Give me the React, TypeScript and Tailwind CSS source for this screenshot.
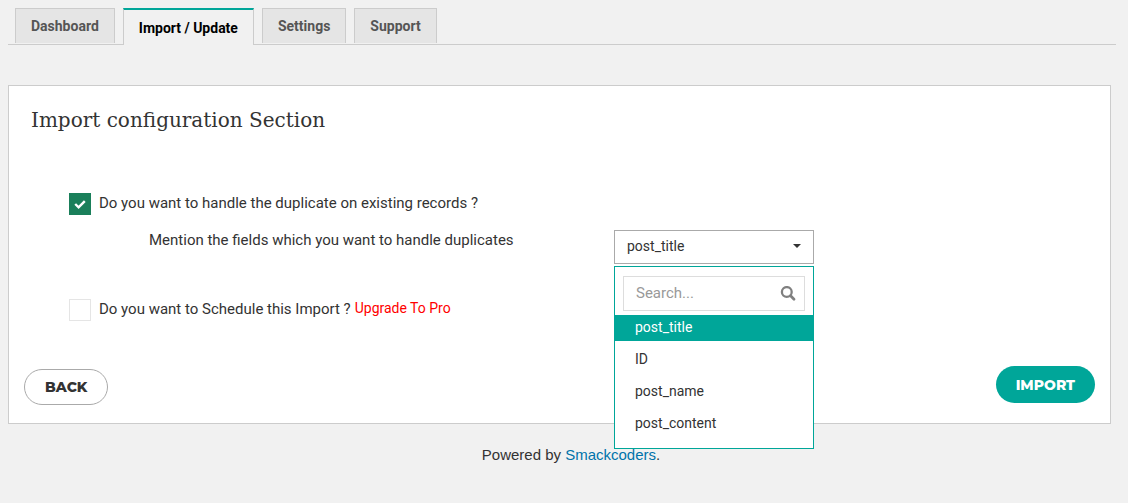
import { useState } from "react";

const tabs = ["Dashboard", "Import / Update", "Settings", "Support"];
const fields = ["post_title", "ID", "post_name", "post_content"];

function CheckOption({
  id,
  label,
  checked,
  onChange,
}: {
  id: string;
  label: string;
  checked: boolean;
  onChange: (value: boolean) => void;
}) {
  return (
    <div className="flex h-[22px] items-center gap-2">
      <span className="relative block size-[22px]">
        <input
          id={id}
          type="checkbox"
          checked={checked}
          onChange={(e) => onChange(e.target.checked)}
          className="block size-[22px] appearance-none border border-[#e5e5e5] bg-white checked:border-[#1a7f5a] checked:bg-[#1a7f5a]"
        />
        {checked && (
          <svg viewBox="0 0 22 22" className="pointer-events-none absolute inset-0 size-[22px]" aria-hidden="true">
            <path d="M6.2 11l3.4 3.3 6.2-6.2" fill="none" stroke="#fff" strokeWidth="2.4" />
          </svg>
        )}
      </span>
      <label htmlFor={id} className="pb-[3px] text-[15px] leading-5">
        {label}
      </label>
    </div>
  );
}

function FieldSelect() {
  const [open, setOpen] = useState(true);
  const [value, setValue] = useState("post_title");
  const [query, setQuery] = useState("");
  const shown = fields.filter((f) => f.toLowerCase().includes(query.toLowerCase()));

  return (
    <div className="relative w-[200px]">
      <button
        type="button"
        aria-labelledby="fields-label"
        aria-expanded={open}
        onClick={() => setOpen(!open)}
        className="flex h-[34px] w-full items-center justify-between border border-[#aaa] bg-white px-3 pb-[2px] text-sm"
      >
        {value}
        <svg viewBox="0 0 8 4" className="h-1 w-2" aria-hidden="true">
          <path d="M0 0h8L4 4z" fill="#333" />
        </svg>
      </button>
      {open && (
        <div className="absolute top-9 left-0 z-10 w-full border border-[#00a699] bg-white pt-[9px] pb-[11px]">
          <div className="mx-2 mb-1 flex h-[35px] items-center border border-[#ddd] pr-2 pl-3">
            <input
              type="text"
              aria-label="Search fields"
              placeholder="Search..."
              value={query}
              onChange={(e) => setQuery(e.target.value)}
              className="min-w-0 flex-1 bg-transparent text-[15px] outline-none placeholder:text-[#999]"
            />
            <svg viewBox="0 0 16 16" className="size-4 shrink-0" fill="none" stroke="#808080" aria-hidden="true">
              <circle cx="6.8" cy="6" r="4.9" strokeWidth="2.3" />
              <path d="M10.6 9.8l3.4 3.4" strokeWidth="2.8" strokeLinecap="round" />
            </svg>
          </div>
          <ul role="listbox" aria-labelledby="fields-label" className="flex flex-col gap-[6px]">
            {shown.map((f) => (
              <li key={f} role="option" aria-selected={f === value}>
                <button
                  type="button"
                  onClick={() => {
                    setValue(f);
                    setOpen(false);
                  }}
                  className={
                    "block h-[26px] w-full px-5 pb-[2px] text-left text-sm " +
                    (f === value ? "bg-[#00a699] text-white" : "text-[#333]")
                  }
                >
                  {f}
                </button>
              </li>
            ))}
          </ul>
        </div>
      )}
    </div>
  );
}

export default function App() {
  const [duplicates, setDuplicates] = useState(true);
  const [schedule, setSchedule] = useState(false);

  return (
    <div className="min-h-screen bg-[#f1f1f1] pt-2 pr-3 pb-7 pl-2 font-['Roboto',sans-serif] text-[#333]">
      <nav className="flex items-end gap-2 border-b border-[#ccc] pl-[7px] text-sm font-bold">
        {tabs.map((tab) =>
          tab === "Import / Update" ? (
            <a
              key={tab}
              href="#import"
              aria-current="page"
              className="-mb-px flex h-[37px] items-center border-x border-t-2 border-x-[#ccc] border-t-[#00a699] bg-[#f1f1f1] px-[15px] text-black"
            >
              {tab}
            </a>
          ) : (
            <a
              key={tab}
              href={"#" + tab.toLowerCase()}
              className="mb-px flex h-[35px] items-center border border-b-0 border-[#ccc] bg-[#e5e5e5] px-[15px] text-[#555]"
            >
              {tab}
            </a>
          ),
        )}
      </nav>

      <main className="mt-10 mr-[5px] border border-[#ccc] bg-white px-[15px] pb-[18px]">
        <h1 className="px-[7px] pt-[18px] font-['Roboto_Slab','DejaVu_Serif',serif] text-[20px] leading-8">
          Import configuration Section
        </h1>

        <div className="mt-[57px] px-[45px]">
          <CheckOption
            id="duplicates"
            label="Do you want to handle the duplicate on existing records ?"
            checked={duplicates}
            onChange={setDuplicates}
          />
          <div className="mt-[15px] flex pl-20">
            <span id="fields-label" className="w-[465px] text-[15px] leading-5">
              Mention the fields which you want to handle duplicates
            </span>
            <FieldSelect />
          </div>
          <div className="mt-[35px] flex items-center gap-1">
            <CheckOption
              id="schedule"
              label="Do you want to Schedule this Import ?"
              checked={schedule}
              onChange={setSchedule}
            />
            <a href="#upgrade" className="pb-1 text-sm leading-[18px] text-[#f00]">
              Upgrade To Pro
            </a>
          </div>
        </div>

        <div className="mt-[45px] flex items-start justify-between font-['Montserrat','Inter',sans-serif] text-sm font-extrabold">
          <button type="button" className="mt-[3px] h-9 rounded-full border border-[#aaa] bg-white px-5">
            BACK
          </button>
          <button type="button" className="h-[37px] rounded-full bg-[#00a699] px-5 text-white">
            IMPORT
          </button>
        </div>
      </main>

      <footer className="mt-[21px] -mr-4 pl-[2px] text-center font-['Liberation_Sans',sans-serif] text-[15px] leading-5">
        Powered by{" "}
        <a href="#smackcoders" className="text-[#0073aa]">
          Smackcoders
        </a>
        .
      </footer>
    </div>
  );
}
